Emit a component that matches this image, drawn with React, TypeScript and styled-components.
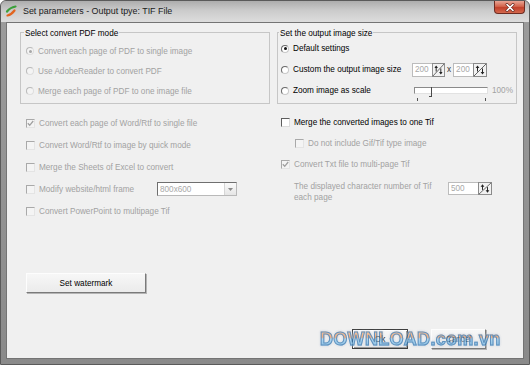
import React from 'react';
import styled, { createGlobalStyle } from 'styled-components';

const GlobalStyle = createGlobalStyle`
  html, body {
    margin: 0;
    padding: 0;
    background: #ffffff;
  }
  body {
    font-family: "Liberation Sans", Arial, sans-serif;
  }
`;

const Window = styled.div`
  box-sizing: border-box;
  width: 530px;
  height: 365px;
  display: flex;
  flex-direction: column;
  padding: 0 5px 5px;
  border: 1px solid #5a5a5a;
  border-radius: 6px 6px 0 0;
  background: linear-gradient(to bottom, #9c9c9c, #8a8a8a);
`;

const TitleBar = styled.div`
  box-sizing: border-box;
  display: flex;
  align-items: center;
  gap: 5px;
  height: 21px;
  margin: 0 -5px;
  padding: 0 4px 2px 4px;
  border-radius: 5px 5px 0 0;
  background: linear-gradient(to bottom, #adadad 0%, #cbcbcb 45%, #dddddd 100%);
`;

const TitleText = styled.span`
  font-size: 8.9px;
  color: #1b1b1b;
`;

const CloseButton = styled.div`
  box-sizing: border-box;
  align-self: flex-start;
  margin-left: auto;
  width: 31px;
  height: 13px;
  display: flex;
  align-items: center;
  justify-content: center;
  border: 1px solid #6e2c22;
  border-top: none;
  border-radius: 0 0 4px 4px;
  background: linear-gradient(to bottom, #e9a595 0%, #d3644c 45%, #c1402a 55%, #d4694e 100%);
`;

const Client = styled.div`
  position: relative;
  flex: 1;
  display: flex;
  flex-direction: column;
  background: #f0f0f0;
  border: 1px solid #747474;
  font-size: 8.2px;
  color: #000;
`;

const GroupRow = styled.div`
  display: flex;
  gap: 7px;
  margin: 3px 0 0 13px;
`;

const Group = styled.fieldset<{ $w: number; $pad: number }>`
  box-sizing: border-box;
  width: ${p => p.$w}px;
  min-width: 0;
  margin: 0;
  padding: 0 0 2px ${p => p.$pad}px;
  border: 1px solid #c6c6c6;
`;

const Caption = styled.legend`
  padding: 3px 1px 0;
  margin-left: -2px;
  line-height: 10px;
  color: #000;
`;

const Options = styled.div<{ $top: number }>`
  display: flex;
  flex-direction: column;
  margin-top: ${p => p.$top}px;
`;

const Row = styled.div<{ $h: number; $indent?: number }>`
  display: flex;
  align-items: center;
  gap: 4px;
  height: ${p => p.$h}px;
  margin-left: ${p => p.$indent ?? 0}px;
`;

const Text = styled.span<{ $off?: boolean }>`
  color: ${p => (p.$off ? '#a2a2a2' : '#000')};
  white-space: nowrap;
`;

const LabelBox = styled.div<{ $w: number }>`
  width: ${p => p.$w}px;
  flex: none;
`;

const RadioDot = styled.span<{ $on?: boolean; $off?: boolean }>`
  box-sizing: border-box;
  flex: none;
  width: 8px;
  height: 8px;
  border-radius: 50%;
  border: 1px solid ${p => (p.$off ? '#b9b9b9' : '#6a6a6a')};
  border-right-color: ${p => (p.$off ? '#dedede' : '#c8c8c8')};
  border-bottom-color: ${p => (p.$off ? '#dedede' : '#c8c8c8')};
  background: ${p => (p.$off ? '#f4f4f4' : '#ffffff')};
  display: flex;
  align-items: center;
  justify-content: center;
  &::after {
    content: '';
    display: ${p => (p.$on ? 'block' : 'none')};
    width: 3px;
    height: 3px;
    border-radius: 50%;
    background: ${p => (p.$off ? '#a8a8a8' : '#111')};
  }
`;

const CheckBox = styled.span<{ $off?: boolean }>`
  box-sizing: border-box;
  flex: none;
  width: 9px;
  height: 9px;
  display: flex;
  border: 1px solid;
  border-color: ${p =>
    p.$off ? '#a9a9a9 #e4e4e4 #e4e4e4 #a9a9a9' : '#5e5e5e #dcdcdc #dcdcdc #5e5e5e'};
  background: ${p => (p.$off ? '#f4f4f4' : '#ffffff')};
`;

const Middle = styled.div`
  display: grid;
  grid-template-columns: 255px 1fr;
  margin-top: 8px;
  padding-left: 19px;
`;

const Column = styled.div`
  display: flex;
  flex-direction: column;
`;

const NoteRow = styled.div`
  display: flex;
  align-items: flex-start;
  margin: 6px 0 0 13px;
`;

const NoteText = styled.div`
  width: 154px;
  line-height: 11px;
  color: #a2a2a2;
`;

const Spin = styled.div<{ $top?: number }>`
  display: flex;
  flex: none;
  margin-top: ${p => p.$top ?? 0}px;
`;

const SpinField = styled.div<{ $w: number; $h: number }>`
  box-sizing: border-box;
  width: ${p => p.$w}px;
  height: ${p => p.$h}px;
  padding-left: 2px;
  display: flex;
  align-items: center;
  background: #ffffff;
  border: 1px solid #bcbcbc;
  border-right: none;
  color: #a8a8a8;
`;

const SizePair = styled.div`
  display: flex;
  align-items: center;
  gap: 2px;
`;

const Times = styled.span`
  color: #333;
`;

const Slider = styled.div`
  position: relative;
  align-self: stretch;
  width: 76px;
  flex: none;
`;

const Track = styled.div`
  box-sizing: border-box;
  position: absolute;
  left: 2px;
  top: 7px;
  width: 74px;
  height: 7px;
  border: 1px solid;
  border-color: #8a8a8a #e2e2e2 #e2e2e2 #8a8a8a;
  background: #ffffff;
`;

const Thumb = styled.div`
  position: absolute;
  left: 19px;
  top: 7px;
  width: 1px;
  height: 10px;
  background: #4a4a4a;
  &::after {
    content: '';
    position: absolute;
    left: -2px;
    bottom: 0;
    width: 2px;
    height: 1px;
    background: #4a4a4a;
  }
`;

const Tick = styled.div<{ $x: number }>`
  position: absolute;
  left: ${p => p.$x}px;
  top: 18px;
  width: 1px;
  height: 3px;
  background: #555;
`;

const Combo = styled.div`
  box-sizing: border-box;
  display: flex;
  width: 80px;
  height: 14px;
  border: 1px solid;
  border-color: #6f6f6f #b9b9b9 #b9b9b9 #6f6f6f;
  background: #ffffff;
`;

const ComboText = styled.span`
  flex: 1;
  padding-left: 2px;
  display: flex;
  align-items: center;
  color: #a8a8a8;
`;

const ComboArrow = styled.span`
  width: 11px;
  display: flex;
  align-items: center;
  justify-content: center;
  border-left: 1px solid #d6d6d6;
  background: linear-gradient(to bottom, #fafafa, #e6e6e6);
`;

const PushButton = styled.button<{ $w: number; $default?: boolean }>`
  box-sizing: border-box;
  width: ${p => p.$w}px;
  height: 20px;
  padding: 0;
  font-family: "Liberation Sans", Arial, sans-serif;
  font-size: 8.2px;
  color: #000;
  background: linear-gradient(to bottom, #f7f7f7, #ebebeb);
  border: 1px solid;
  border-color: ${p => (p.$default ? '#3e3e3e' : '#fdfdfd #7a7a7a #7a7a7a #fdfdfd')};
  box-shadow: ${p => (p.$default ? 'inset 1px 1px 0 #fff, inset -1px -1px 0 #9a9a9a' : '1px 1px 0 #b4b4b4')};
`;

const WatermarkRow = styled.div`
  margin: 51px 0 0 19px;
`;

const ButtonRow = styled.div`
  display: flex;
  justify-content: flex-end;
  gap: 23px;
  margin-top: auto;
  padding: 0 37px 9px 0;
`;

/* site watermark stamped over the dialog's lower right corner */
const Watermark = styled.div`
  position: absolute;
  left: 313px;
  top: 307px;
  font-family: "Liberation Sans", Arial, sans-serif;
  font-weight: bold;
  font-size: 18px;
  line-height: 18px;
  letter-spacing: 0.3px;
  white-space: nowrap;
  color: transparent;
  background: linear-gradient(to bottom, #f6bf95 0%, #ee9a62 40%, #9fd0ef 50%, #5fabdf 100%);
  -webkit-background-clip: text;
  background-clip: text;
  -webkit-text-stroke: 1px #3a78b0;
  filter: drop-shadow(0 0 0.8px #ffffff) drop-shadow(0.6px 0.8px 0 rgba(40, 80, 130, 0.45));
  opacity: 0.78;
  pointer-events: none;
`;

const AppIcon = () => (
  <svg width="13" height="13" viewBox="0 0 13 13">
    <path d="M2 7.5 Q5 3.5 10.5 2.5" stroke="#3a9f3a" strokeWidth="2.2" fill="none" strokeLinecap="round" />
    <path d="M2.5 11.5 Q6.5 10.5 9.5 6.5" stroke="#e2651f" strokeWidth="2.2" fill="none" strokeLinecap="round" />
  </svg>
);

const CloseGlyph = () => (
  <svg width="10" height="9" viewBox="0 0 10 9">
    <path d="M2 1.5 L8 7.5 M8 1.5 L2 7.5" stroke="#6b2a20" strokeWidth="3" strokeLinecap="round" />
    <path d="M2 1.5 L8 7.5 M8 1.5 L2 7.5" stroke="#ffffff" strokeWidth="1.6" strokeLinecap="round" />
  </svg>
);

const Tick9 = ({ color }: { color: string }) => (
  <svg width="7" height="7" viewBox="0 0 7 7">
    <path d="M0.8 3.3 L2.7 5.3 L6.2 1" stroke={color} strokeWidth="1.3" fill="none" />
  </svg>
);

const SpinGlyph = ({ w, h }: { w: number; h: number }) => (
  <svg width={w} height={h} viewBox="0 0 14 14" preserveAspectRatio="none">
    <rect x="0.5" y="0.5" width="13" height="13" fill="#f2f2f2" stroke="#8a8a8a" />
    <line x1="1" y1="13" x2="13" y2="1" stroke="#555" strokeWidth="0.9" />
    <path d="M4.5 3.5 V8.5" stroke="#222" strokeWidth="1" />
    <path d="M2.6 5 L4.5 2.4 L6.4 5 Z" fill="#222" />
    <path d="M9.5 5.5 V10.5" stroke="#222" strokeWidth="1" />
    <path d="M7.6 9 L9.5 11.6 L11.4 9 Z" fill="#222" />
  </svg>
);

const ArrowDown = () => (
  <svg width="5" height="3" viewBox="0 0 5 3">
    <path d="M0 0 H5 L2.5 3 Z" fill="#8a8a8a" />
  </svg>
);

const Radio = ({ label, on, off }: { label: string; on?: boolean; off?: boolean }) => (
  <>
    <RadioDot $on={on} $off={off} />
    <Text $off={off}>{label}</Text>
  </>
);

const Check = ({ on, off }: { on?: boolean; off?: boolean }) => (
  <CheckBox $off={off}>{on && <Tick9 color={off ? '#a0a0a0' : '#111'} />}</CheckBox>
);

const SpinBox = ({ value, w, h, glyph }: { value: string; w: number; h: number; glyph: number }) => (
  <Spin>
    <SpinField $w={w} $h={h}>{value}</SpinField>
    <SpinGlyph w={glyph} h={h} />
  </Spin>
);

const wordOptions = [
  { label: 'Convert each page of Word/Rtf to single file', on: true },
  { label: 'Convert Word/Rtf to image by quick mode' },
  { label: 'Merge the Sheets of Excel to convert' },
];

export default function App() {
  return (
    <>
      <GlobalStyle />
      <Window>
        <TitleBar>
          <AppIcon />
          <TitleText>Set parameters - Output tpye: TIF File</TitleText>
          <CloseButton>
            <CloseGlyph />
          </CloseButton>
        </TitleBar>

        <Client>
          <GroupRow>
            <Group $w={250} $pad={5}>
              <Caption>Select convert PDF mode</Caption>
              <Options $top={2}>
                <Row $h={20}><Radio off on label="Convert each page of PDF to single image" /></Row>
                <Row $h={20}><Radio off label="Use AdobeReader to convert PDF" /></Row>
                <Row $h={20}><Radio off label="Merge each page of PDF to one image file" /></Row>
              </Options>
            </Group>

            <Group $w={240} $pad={3}>
              <Caption>Set the output image size</Caption>
              <Options $top={-1}>
                <Row $h={21}><Radio on label="Default settings" /></Row>
                <Row $h={21}>
                  <RadioDot />
                  <LabelBox $w={115}><Text>Custom the output image size</Text></LabelBox>
                  <SizePair>
                    <SpinBox value="200" w={20} h={14} glyph={13} />
                    <Times>x</Times>
                    <SpinBox value="200" w={20} h={14} glyph={14} />
                  </SizePair>
                </Row>
                <Row $h={21}>
                  <RadioDot />
                  <LabelBox $w={115}><Text>Zoom image as scale</Text></LabelBox>
                  <Slider>
                    <Track />
                    <Thumb />
                    <Tick $x={5} />
                    <Tick $x={73} />
                  </Slider>
                  <Text $off>100%</Text>
                </Row>
              </Options>
            </Group>
          </GroupRow>

          <Middle>
            <Column>
              {wordOptions.map(o => (
                <Row $h={22} key={o.label}>
                  <Check off on={o.on} />
                  <Text $off>{o.label}</Text>
                </Row>
              ))}
              <Row $h={22}>
                <Check off />
                <LabelBox $w={114}><Text $off>Modify website/html frame</Text></LabelBox>
                <Combo>
                  <ComboText>800x600</ComboText>
                  <ComboArrow><ArrowDown /></ComboArrow>
                </Combo>
              </Row>
              <Row $h={22}>
                <Check off />
                <Text $off>Convert PowerPoint to multipage Tif</Text>
              </Row>
            </Column>

            <Column>
              <Row $h={21}>
                <Check />
                <Text>Merge the converted images to one Tif</Text>
              </Row>
              <Row $h={21} $indent={14}>
                <Check off />
                <Text $off>Do not include Gif/Tif type image</Text>
              </Row>
              <Row $h={21}>
                <Check off on />
                <Text $off>Convert Txt file to multi-page Tif</Text>
              </Row>
              <NoteRow>
                <NoteText>
                  The displayed character number of Tif
                  <br />
                  each page
                </NoteText>
                <Spin $top={1}>
                  <SpinField $w={30} $h={13}>500</SpinField>
                  <SpinGlyph w={14} h={13} />
                </Spin>
              </NoteRow>
            </Column>
          </Middle>

          <WatermarkRow>
            <PushButton $w={120}>Set watermark</PushButton>
          </WatermarkRow>

          <ButtonRow>
            <PushButton $w={56} $default>Ok</PushButton>
            <PushButton $w={55}>Cancel</PushButton>
          </ButtonRow>

          <Watermark>DOWNLOAD.com.vn</Watermark>
        </Client>
      </Window>
    </>
  );
}
